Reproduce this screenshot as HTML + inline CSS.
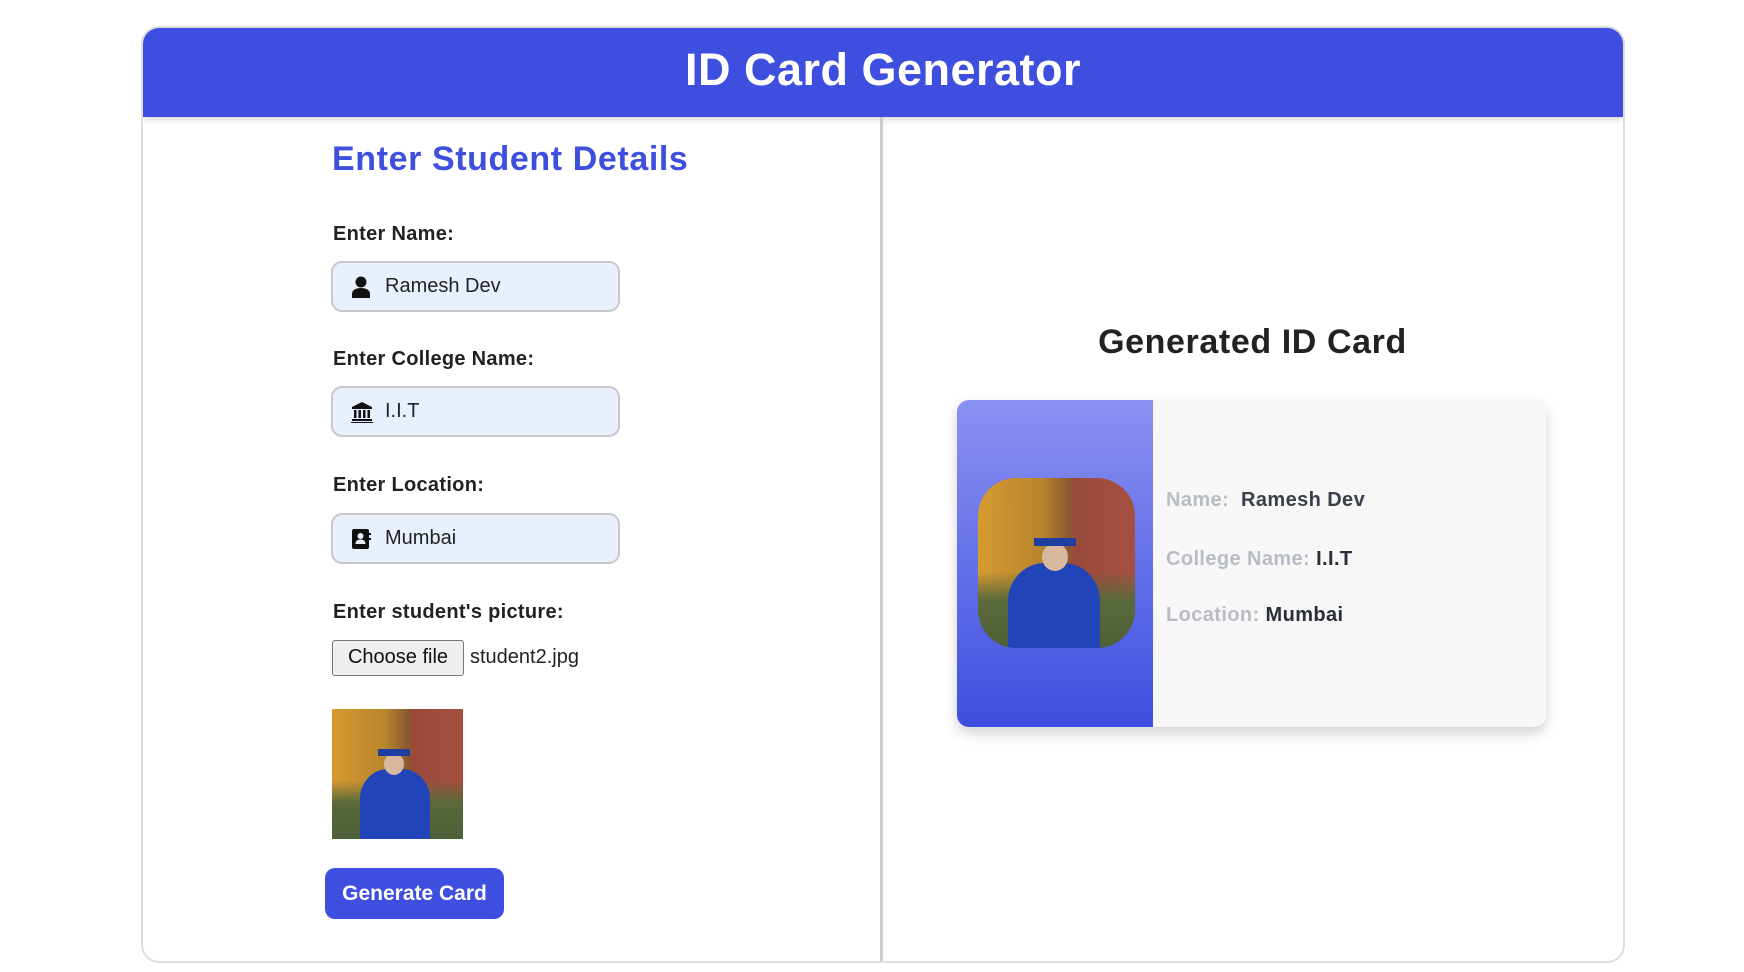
<!DOCTYPE html>
<html><head><style>
*{box-sizing:border-box;margin:0;padding:0}
body{width:1744px;height:972px;background:#fff;font-family:"Liberation Sans",sans-serif;position:relative;overflow:hidden}
.wrap{position:absolute;left:141px;top:26px;width:1484px;height:937px;border:2px solid #ddd;border-radius:18px;overflow:hidden}
.hdr{position:absolute;left:0;top:0;right:0;height:89px;background:#3e4fe0;color:#fff;font-weight:bold;font-size:45px;text-align:center;line-height:84px;box-shadow:0 3px 6px rgba(0,0,0,.15);letter-spacing:0.5px}
.div{position:absolute;left:737px;top:89px;bottom:0;width:3px;background:#ccc}
.a{position:absolute}
.h2{color:#3e4fe0;font-size:34px;font-weight:bold;left:332px;top:140px;letter-spacing:0.6px}
.lbl{font-size:20px;font-weight:bold;color:#222;left:333px;letter-spacing:0.3px}
.inp{left:331px;width:289px;height:51px;background:#e8effd;border:2px solid #c8c8cc;border-radius:11px;font-size:20px;color:#222;line-height:47px;padding-left:52px}
.inp svg{position:absolute;left:18px;top:13px}
.btn{left:332px;top:640px;width:132px;height:36px;border:1.5px solid #777;border-radius:3px;background:#efefef;font-size:20px;text-align:center;line-height:33px;color:#111}
.photo{background:
 linear-gradient(180deg,transparent 55%,#5a6a3a 72%,#4f5f38 100%),
 linear-gradient(90deg,#d69a30 0%,#b8862c 40%,#8a5a30 58%,#9b4a3a 62%,#a55040 100%)}
.gown{position:absolute;background:#2145b8;border-radius:40% 40% 8% 8%}
</style></head><body>
<div class="wrap">
<div class="hdr">ID Card Generator</div>
<div class="div"></div>
</div>
<div class="a h2">Enter Student Details</div>
<div class="a lbl" style="top:223px">Enter Name:</div>
<div class="a inp" style="top:261px"><svg width="20" height="22" viewBox="0 0 20 22"><circle cx="10" cy="6" r="5.5" fill="#111"/><path d="M1 22v-4c0-4 4-6 9-6s9 2 9 6v4z" fill="#111"/></svg>Ramesh Dev</div>
<div class="a lbl" style="top:348px">Enter College Name:</div>
<div class="a inp" style="top:386px"><svg width="22" height="22" viewBox="0 0 22 22"><path d="M11 1L1 6v2h20V6z" fill="#111"/><rect x="3" y="9" width="2.5" height="8" fill="#111"/><rect x="7.5" y="9" width="2.5" height="8" fill="#111"/><rect x="12" y="9" width="2.5" height="8" fill="#111"/><rect x="16.5" y="9" width="2.5" height="8" fill="#111"/><rect x="1" y="18" width="20" height="2" fill="#111"/><rect x="0" y="21" width="22" height="1.2" fill="#111"/></svg>I.I.T</div>
<div class="a lbl" style="top:474px">Enter Location:</div>
<div class="a inp" style="top:513px"><svg width="20" height="22" viewBox="0 0 20 22"><rect x="1" y="1" width="17" height="20" rx="2" fill="#111"/><circle cx="9.5" cy="8" r="3" fill="#e8effd"/><path d="M4.5 16c0-3 2-4.5 5-4.5s5 1.5 5 4.5z" fill="#e8effd"/><rect x="17" y="5" width="3" height="2" fill="#111"/><rect x="17" y="10" width="3" height="2" fill="#111"/></svg>Mumbai</div>
<div class="a lbl" style="top:601px">Enter student's picture:</div>
<div class="a btn">Choose file</div>
<div class="a" style="left:470px;top:646px;font-size:20px;color:#222">student2.jpg</div>
<div class="a photo" style="left:332px;top:709px;width:131px;height:130px;overflow:hidden">
 <div class="gown" style="left:28px;top:60px;width:70px;height:75px"></div>
 <div class="a" style="left:52px;top:44px;width:20px;height:22px;background:#d9b8a0;border-radius:50%"></div>
 <div class="a" style="left:46px;top:40px;width:32px;height:7px;background:#1f3fa0"></div>
</div>
<div class="a" style="left:325px;top:868px;width:179px;height:51px;background:#3e4fe0;border-radius:10px;color:#fff;font-weight:bold;font-size:21px;text-align:center;line-height:51px">Generate Card</div>

<div class="a" style="left:1025px;top:323px;width:455px;text-align:center;font-size:34px;font-weight:bold;color:#222;letter-spacing:0.6px">Generated ID Card</div>
<div class="a" style="left:957px;top:400px;width:589px;height:327px;background:#f7f7f8;border-radius:12px;box-shadow:0 6px 14px rgba(0,0,0,.18);overflow:hidden">
 <div class="a" style="left:0;top:0;width:196px;height:100%;background:linear-gradient(180deg,#8a92f2,#3e4fe0)"></div>
 <div class="a photo" style="left:21px;top:78px;width:157px;height:170px;border-radius:38px;overflow:hidden">
  <div class="gown" style="left:30px;top:85px;width:92px;height:95px"></div>
  <div class="a" style="left:64px;top:65px;width:26px;height:28px;background:#d9b8a0;border-radius:50%"></div>
  <div class="a" style="left:56px;top:60px;width:42px;height:8px;background:#1f3fa0"></div>
 </div>
 <div class="a" style="left:209px;top:89px;font-size:20px;font-weight:bold;color:#b8bcc4;letter-spacing:0.4px">Name:&nbsp; <span style="color:#3a3f4a">Ramesh Dev</span></div>
 <div class="a" style="left:209px;top:148px;font-size:20px;font-weight:bold;color:#b8bcc4;letter-spacing:0.4px">College Name: <span style="color:#2a2e38">I.I.T</span></div>
 <div class="a" style="left:209px;top:204px;font-size:20px;font-weight:bold;color:#b8bcc4;letter-spacing:0.4px">Location: <span style="color:#2a2e38">Mumbai</span></div>
</div>
</body></html>
